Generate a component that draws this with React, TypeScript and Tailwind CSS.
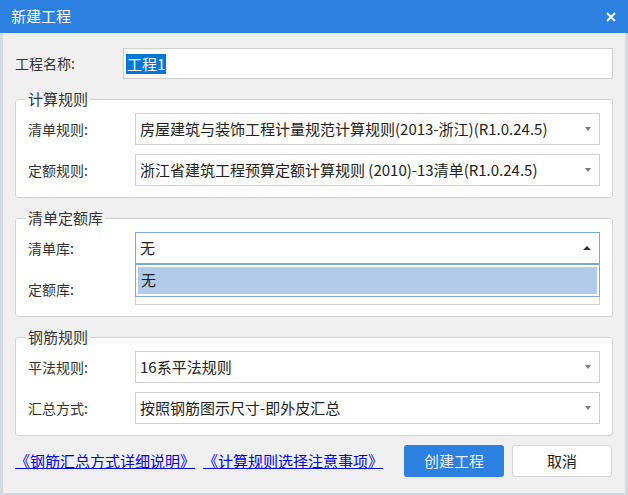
import React from 'react';

const font = "font-['Microsoft_YaHei','Noto_Sans_CJK_SC',sans-serif]";

const Caret: React.FC<{ up?: boolean }> = ({ up }) =>
  up ? (
    <span className="ml-auto w-0 h-0 border-x-[4px] border-b-[4px] border-x-transparent border-b-[#333]" />
  ) : (
    <span className="ml-auto w-0 h-0 border-x-[3.5px] border-t-[4px] border-x-transparent border-t-[#7a7a7a]" />
  );

const SelectRow: React.FC<{ label: string; value: string; focused?: boolean; children?: React.ReactNode }> = ({
  label,
  value,
  focused,
  children,
}) => (
  <div className="flex items-center h-[32px]">
    <span className="w-[107px] text-[14px] text-[#333]">{label}</span>
    <div className="relative w-[465px] h-[32px]">
      <div
        className={`h-full flex items-center pl-[4px] pr-[8px] bg-white border text-[15px] text-[#222] ${
          focused ? 'border-[#7ea6ea]' : 'border-[#cfcfcf]'
        }`}
      >
        <span className="whitespace-nowrap">{value}</span>
        <Caret up={focused} />
      </div>
      {children}
    </div>
  </div>
);

const Group: React.FC<{ title: string; children: React.ReactNode; className?: string }> = ({ title, children, className }) => (
  <fieldset className={`border border-[#d3d3d3] rounded-[3px] bg-white px-[12px] pt-[4px] pb-[11px] ${className ?? ''}`}>
    <legend className="ml-[-2px] px-[2px] text-[15px] leading-[20px] text-[#333]">{title}</legend>
    <div className="flex flex-col gap-[9px]">{children}</div>
  </fieldset>
);

export default function App() {
  return (
    <div className={`w-[628px] h-[495px] flex flex-col bg-[#f0f0f0] ${font}`}>
      <div className="h-[33px] shrink-0 bg-[#2c80e0] flex items-center justify-between pl-[11px] pr-[12px] text-white text-[15px]">
        <span>新建工程</span>
        <svg width="10" height="10" viewBox="0 0 10 10">
          <path d="M1 1 L9 9 M9 1 L1 9" stroke="white" strokeWidth="1.8" />
        </svg>
      </div>

      <div className="flex-1 border-x-[3px] border-b-[2px] border-[#d5d8dc] pt-[15px] px-[12px]">
        <div className="flex items-center h-[31px]">
          <span className="w-[108px] text-[14px] text-[#333]">工程名称:</span>
          <div className="flex-1 h-full flex items-center bg-white border border-[#cfcfcf] pl-[2px]">
            <span className="bg-[#0078d7] text-white text-[15px] leading-[20px] px-[1px]">工程1</span>
          </div>
        </div>

        <Group title="计算规则" className="mt-[10px]">
          <SelectRow label="清单规则:" value="房屋建筑与装饰工程计量规范计算规则(2013-浙江)(R1.0.24.5)" />
          <SelectRow label="定额规则:" value="浙江省建筑工程预算定额计算规则 (2010)-13清单(R1.0.24.5)" />
        </Group>

        <Group title="清单定额库" className="mt-[10px]">
          <SelectRow label="清单库:" value="无" focused>
            <div className="absolute left-0 top-full w-full h-[33px] z-10 bg-white border border-[#7ea6ea] p-[2px]">
              <div className="h-full bg-[#b2cbeb] flex items-center pl-[3px] text-[15px] text-[#222]">无</div>
            </div>
          </SelectRow>
          <SelectRow label="定额库:" value="无" />
        </Group>

        <Group title="钢筋规则" className="mt-[10px]">
          <SelectRow label="平法规则:" value="16系平法规则" />
          <SelectRow label="汇总方式:" value="按照钢筋图示尺寸-即外皮汇总" />
        </Group>

        <div className="mt-[9px] flex items-center h-[32px]">
          <a className="text-[15px] text-[#0000ee] underline">《钢筋汇总方式详细说明》</a>
          <a className="ml-[8px] text-[15px] text-[#0000ee] underline">《计算规则选择注意事项》</a>
          <button className="ml-auto w-[100px] h-[32px] rounded-[3px] bg-[#2c80e0] text-[15px] text-[#eaf2ff]">
            创建工程
          </button>
          <button className="ml-[8px] mr-[1px] w-[100px] h-[32px] rounded-[3px] bg-white border border-[#d6d6d6] text-[15px] text-[#222]">
            取消
          </button>
        </div>
      </div>
    </div>
  );
}
